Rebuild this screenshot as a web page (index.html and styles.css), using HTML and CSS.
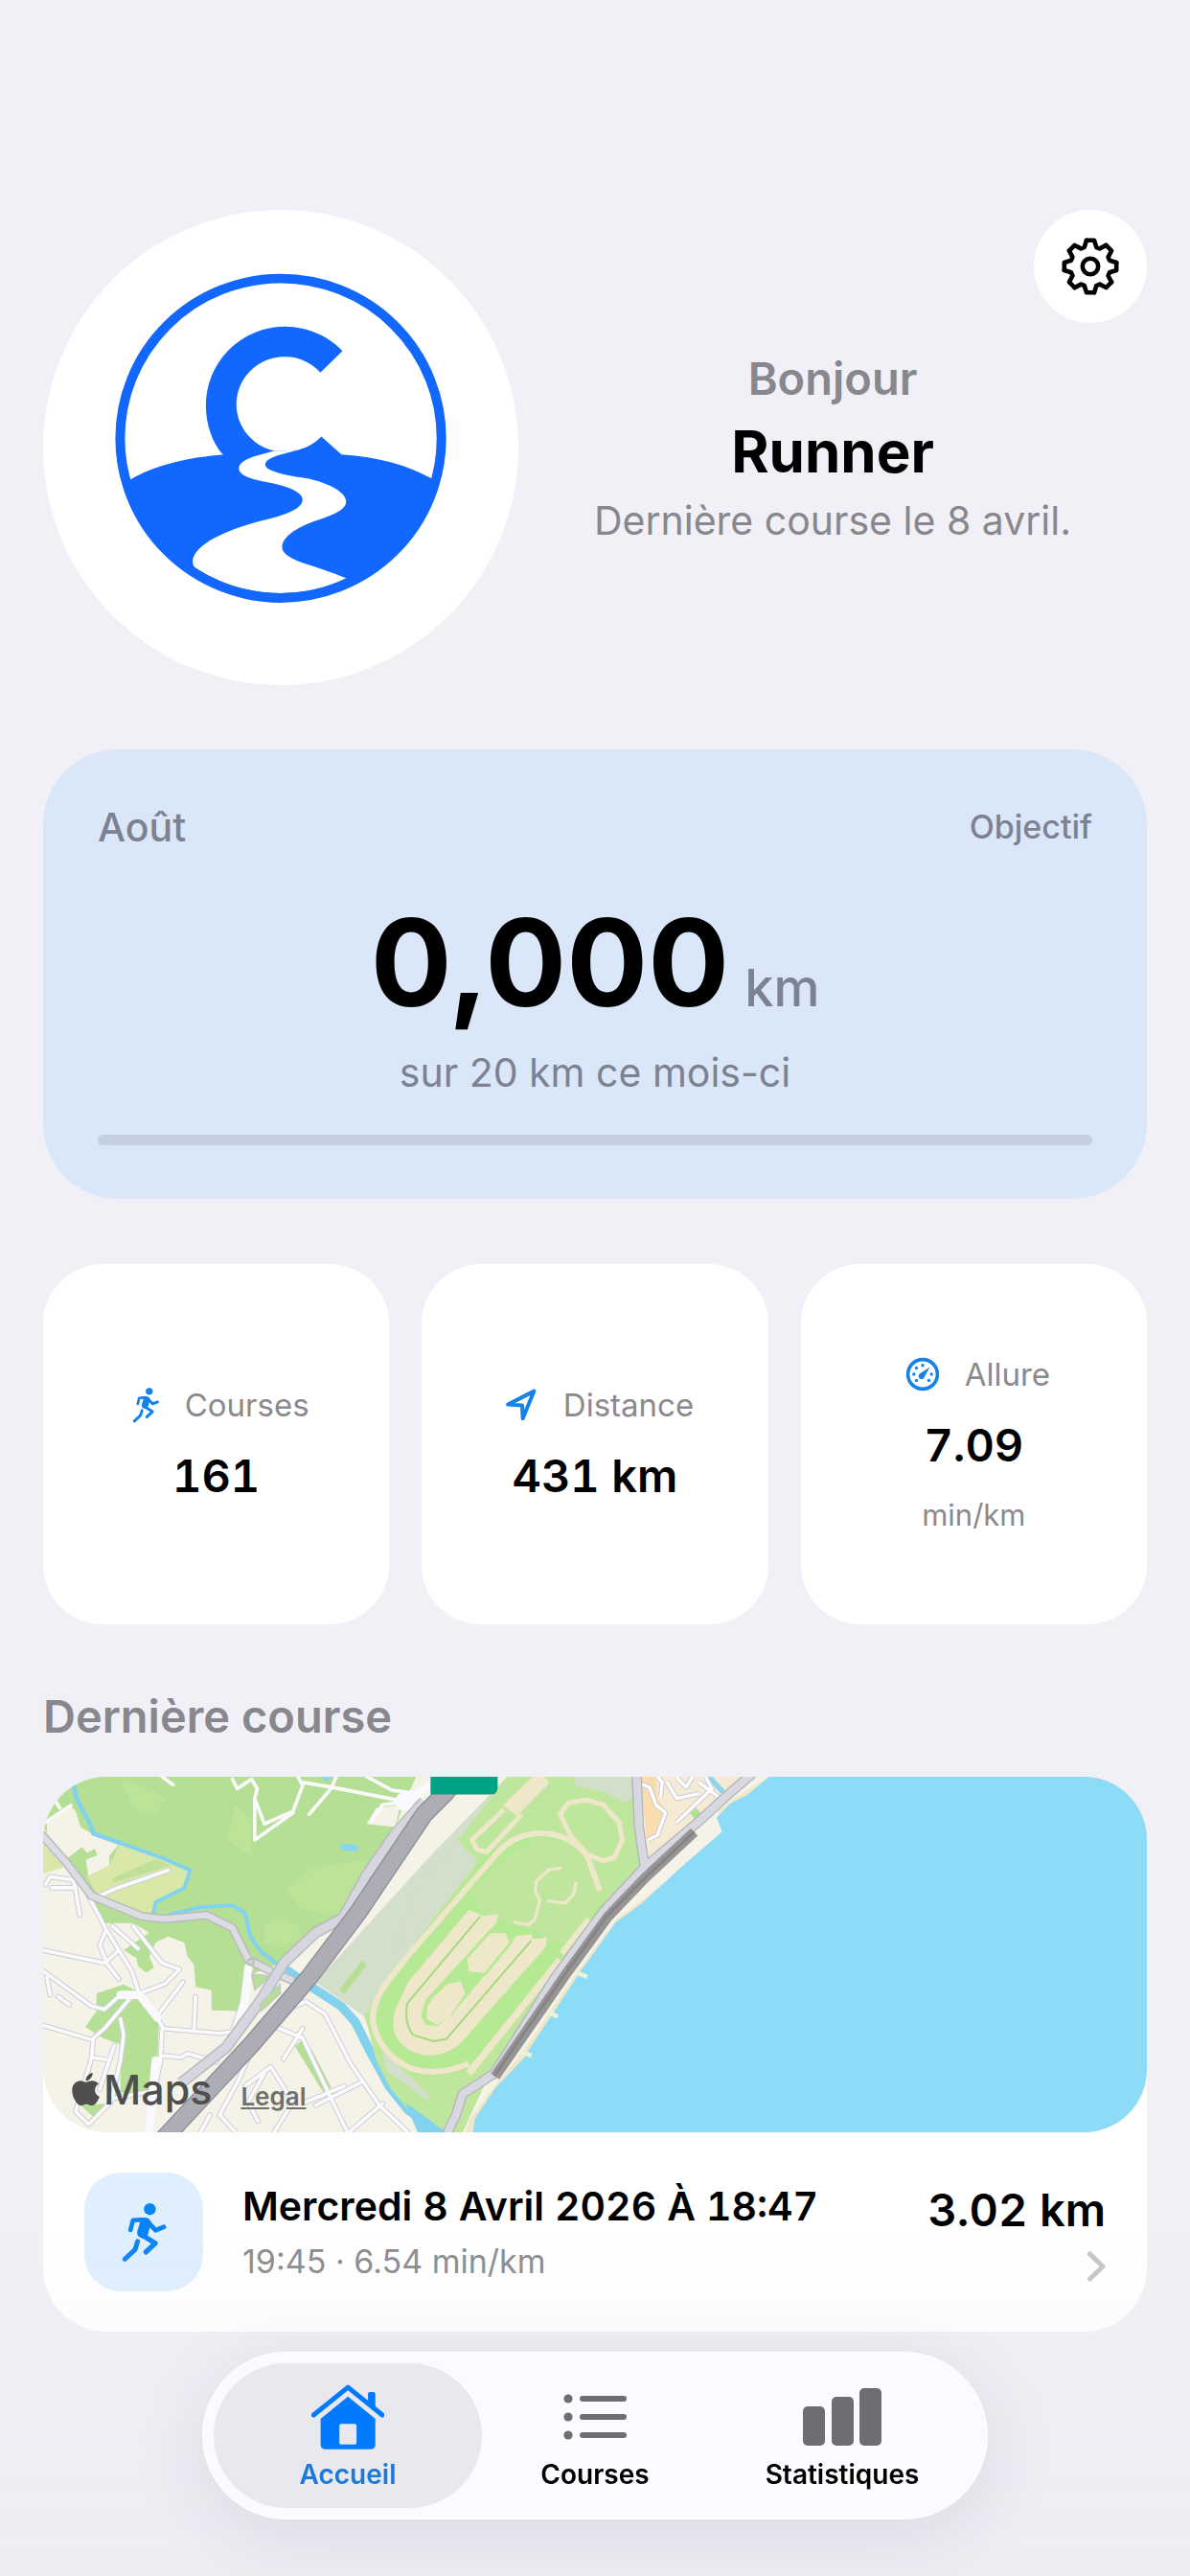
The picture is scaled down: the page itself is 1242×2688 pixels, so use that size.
FILE: index.html
```html
<!DOCTYPE html>
<html lang="fr">
<head>
  <meta charset="UTF-8">
  <meta name="viewport" content="width=device-width, initial-scale=1.0">
  <title>Accueil</title>
  <link rel="stylesheet" href="styles.css">
</head>
<body>
  <svg width="0" height="0" class="defs" aria-hidden="true">
    <symbol id="runner" viewBox="36 30 50 64">
      <circle cx="67.4" cy="38.2" r="6.2" fill="currentColor"/>
      <g fill="none" stroke="currentColor" stroke-linecap="round" stroke-linejoin="round">
        <path d="M62 49.2 L49.8 49.8 L47.2 60" stroke-width="4.6"/>
        <path d="M65.5 52 L73.5 60.2 L82 56.8" stroke-width="4.8"/>
        <path d="M59 65 L73 73.8 L63.2 83" stroke-width="5.2"/>
        <path d="M54.6 71.8 L52 80.4 L41.2 90.3" stroke-width="5"/>
      </g>
      <path d="M54 47.3 H63 Q67 47.3 69 52 L65.4 64.6 Q64 69 59 68.6 Q53.4 67 54.2 61.6 L57.4 51 Z" fill="currentColor"/>
    </symbol>
  </svg>

  <main class="app">
    <header class="profile">
      <div class="avatar">
        <svg viewBox="0 0 496 496" role="img" aria-label="Logo">
          <g transform="translate(-15 -19) scale(.3443 .3381)">
            <path class="logo-blue" d="M293 893 L308 889 C380 845 480 820 589 812 C557 775 537 720 537 660 A240 243 0 0 1 951 492 L884 558 A146 147 0 1 0 745 800 L815 798 C845 790 870 775 887 756 L948 811 C1060 818 1150 845 1221 885 L1236 890 A487 493 0 0 1 293 893 Z"/>
            <path fill="#fff" d="M745 800 C700 812 637 825 637 853 C637 880 690 890 720 896 C790 908 830 930 830 950 C830 985 750 1005 700 1017 C580 1050 497 1095 497 1143 Q497 1155 507 1162 C580 1212 670 1239 764 1239 C835 1239 905 1222 962 1193 C920 1175 880 1162 850 1152 C800 1137 768 1118 768 1098 C768 1065 810 1040 850 1023 C910 1003 962 985 962 957 C962 925 900 895 840 884 C770 875 717 860 717 843 C717 822 760 812 815 798 Z"/>
            <ellipse cx="764" cy="761" rx="487" ry="493" fill="none" stroke="#1268fe" stroke-width="29"/>
          </g>
        </svg>
      </div>
      <div class="profile-side">
        <button class="settings" type="button" aria-label="Réglages">
          <svg viewBox="-30 -30 60 60">
            <defs>
              <path id="tooth" d="M-4 -27.2 H4 L6.3 -20 L9.7 -18.6 L16.4 -22.1"/>
            </defs>
            <g fill="none" stroke="#000" stroke-width="4.6" stroke-linejoin="round" stroke-linecap="round">
              <use href="#tooth"/>
              <use href="#tooth" transform="rotate(45)"/>
              <use href="#tooth" transform="rotate(90)"/>
              <use href="#tooth" transform="rotate(135)"/>
              <use href="#tooth" transform="rotate(180)"/>
              <use href="#tooth" transform="rotate(225)"/>
              <use href="#tooth" transform="rotate(270)"/>
              <use href="#tooth" transform="rotate(315)"/>
              <circle r="8.2"/>
            </g>
          </svg>
        </button>
        <div class="greeting">
          <p class="hello">Bonjour</p>
          <h1>Runner</h1>
          <p class="last">Dernière course le 8 avril.</p>
        </div>
      </div>
    </header>

    <section class="goal">
      <div class="goal-head">
        <h2>Août</h2>
        <button type="button">Objectif</button>
      </div>
      <p class="goal-value"><strong>0,000</strong><span>km</span></p>
      <p class="goal-text" id="goal-text">sur 20 km ce mois-ci</p>
      <progress value="0" max="20" aria-labelledby="goal-text"></progress>
    </section>

    <section class="stats">
      <div class="stat">
        <div class="stat-label">
          <svg class="icon-run" viewBox="0 0 30 38"><use href="#runner"/></svg>
          <span>Courses</span>
        </div>
        <strong>161</strong>
      </div>
      <div class="stat">
        <div class="stat-label">
          <svg class="icon-stat" viewBox="0 0 36 36">
            <path d="M31.4 3.6 L4 17.6 L19 18.6 L19.6 32.2 Z" fill="none" stroke="currentColor" stroke-width="4" stroke-linejoin="round"/>
          </svg>
          <span>Distance</span>
        </div>
        <strong>431 km</strong>
      </div>
      <div class="stat">
        <div class="stat-label">
          <svg class="icon-stat" viewBox="0 0 36 36">
            <circle cx="18" cy="18" r="15.4" fill="none" stroke="currentColor" stroke-width="3.6"/>
            <g fill="currentColor">
              <circle cx="18" cy="8.8" r="1.7"/>
              <circle cx="11.5" cy="11.5" r="1.7"/>
              <circle cx="8.8" cy="18" r="1.7"/>
              <circle cx="27.2" cy="18" r="1.7"/>
              <circle cx="11.5" cy="24.5" r="1.7"/>
              <circle cx="24.5" cy="24.5" r="1.7"/>
              <path d="M25.4 10.4 L15.6 17 A3.2 3.2 0 1 0 20 20.6 Z"/>
            </g>
          </svg>
          <span>Allure</span>
        </div>
        <strong>7.09</strong>
        <small>min/km</small>
      </div>
    </section>

    <section class="last-run">
      <h2>Dernière course</h2>
      <div class="run-card">
        <div class="map">
          <svg class="map-drawing" viewBox="0 0 3453 1113" preserveAspectRatio="xMidYMid slice" aria-hidden="true">
            <rect width="3453" height="1113" fill="#f5f2e8"/>

            <!-- ville et parc, à l'ouest -->
            <g transform="translate(-48 -342)">
              <path fill="#b4df95" d="M48 342 H1215 L1175 430 1140 530 1065 640 985 780 860 850 780 930 700 960 690 1000 655 1075 575 1073 575 1010 525 1000 520 930 500 905 490 862 440 842 400 860 380 905 395 940 370 955 345 935 340 910 300 885 380 830 330 800 240 800 200 720 120 600 48 500Z"/>
              <path fill="#f5f2e8" d="M60 480 L130 430 150 450 165 500 200 520 290 548 255 590 255 620 190 655 180 590 120 600 60 520Z"/>
              <path fill="#b4df95" d="M120 600 L170 562 185 580 210 568 218 588 175 605 190 655Z"/>
              <path fill="#d9e7a9" d="M48 550 L115 625 48 645ZM290 548 L510 635 500 680 395 745 390 780 220 715 185 655 255 620Z"/>
              <path fill="#c2df98" d="M265 660 L400 600 450 620 265 675Z"/>
              <path fill="#bde399" d="M290 350 L400 390 430 410 400 465 330 440ZM650 430 L700 480 700 590 625 540ZM880 630 L1060 600 1040 680 985 780 860 760 810 700ZM740 810 L790 780 850 810 850 850 790 880 740 860Z"/>
              <path fill="#b4df95" d="M215 1020 L300 992 345 1015 390 1060 410 1120 405 1240 380 1340 290 1330 290 1180 235 1160 180 1125 215 1075ZM165 1370 L240 1365 210 1410ZM835 1185 L860 1165 890 1200 950 1315 925 1330Z"/>
              <path fill="#f5f2e8" d="M1060 490 L1090 440 1165 430 1150 500ZM820 930 L960 850 870 970Z"/>
              <path fill="#d2dfca" d="M1500 342 L1260 590 900 985 1050 1090 1110 1230 1260 1380 1700 800 1700 342Z"/>
              <path fill="#b4e08f" d="M975 1010 L1045 918 1060 930 990 1022Z"/>
              <path fill="#8bd4ee" d="M980 552 L1032 556 1030 577 980 572ZM915 342 H955 L935 358Z"/>

              <g fill="none" stroke="#82d2ee" stroke-linejoin="round">
                <path stroke-width="14" d="M138 342 L152 410 195 490 205 520 290 550"/>
                <path stroke-width="12" d="M290 550 L430 600 508 635 490 690 400 735 392 775M440 775 L540 750 640 745 680 768 695 840 730 890 790 935"/>
                <path stroke-width="28" d="M800 940 L850 975 980 1060 1025 1110 1070 1200 1130 1310 1190 1385 1270 1440"/>
              </g>

              <g fill="none" stroke-linejoin="round" stroke-linecap="round">
                <path class="street-case" d="M48 885 L240 925 280 890M48 950 L200 1060 240 1070 290 1025 350 1025 400 1090 425 1130 600 1145 640 1140 670 1050 690 930M48 1120 L200 1165 240 1130 320 1035M190 715 L245 820 325 950 350 1025M225 715 L280 690 440 635M55 680 L70 655 140 665 150 690 75 690M150 700 L163 775M245 820 L225 870 250 930 285 975M265 810 L345 880M330 810 L420 925 475 945 430 990 350 1020M405 1090 L485 985M525 1030 L520 1135M425 1215 L480 1220 500 1208 590 1235M420 1130 L415 1230 395 1330 380 1400M290 1100 L300 1150 290 1230 260 1360 190 1430 150 1390 200 1220 205 1160M270 1185 L225 1320M200 1220 L250 1228M60 970 L70 1025M95 1030 L130 1055M260 1350 L370 1330"/>
                <path class="street-case" d="M740 1110 L660 1290 600 1400 650 1455M740 1110 L860 1160 940 1330 1000 1455M790 1080 L870 1045 930 1085 1010 1240 1100 1370 1190 1455M860 1130 L800 1225M680 1310 L760 1250 830 1360 770 1455M740 1270 L690 1360 720 1420M870 1360 L990 1310M1010 1450 L1110 1365M1040 1300 L900 1370M540 1455 L570 1400"/>
                <path class="street" d="M48 885 L240 925 280 890M48 950 L200 1060 240 1070 290 1025 350 1025 400 1090 425 1130 600 1145 640 1140 670 1050 690 930M48 1120 L200 1165 240 1130 320 1035M190 715 L245 820 325 950 350 1025M225 715 L280 690 440 635M55 680 L70 655 140 665 150 690 75 690M150 700 L163 775M245 820 L225 870 250 930 285 975M265 810 L345 880M330 810 L420 925 475 945 430 990 350 1020M405 1090 L485 985M525 1030 L520 1135M425 1215 L480 1220 500 1208 590 1235M420 1130 L415 1230 395 1330 380 1400M290 1100 L300 1150 290 1230 260 1360 190 1430 150 1390 200 1220 205 1160M270 1185 L225 1320M200 1220 L250 1228M60 970 L70 1025M95 1030 L130 1055M260 1350 L370 1330"/>
                <path class="street" d="M740 1110 L660 1290 600 1400 650 1455M740 1110 L860 1160 940 1330 1000 1455M790 1080 L870 1045 930 1085 1010 1240 1100 1370 1190 1455M860 1130 L800 1225M680 1310 L760 1250 830 1360 770 1455M740 1270 L690 1360 720 1420M870 1360 L990 1310M1010 1450 L1110 1365M1040 1300 L900 1370M540 1455 L570 1400"/>
                <path class="street" d="M48 490 L135 432M75 400 L100 440M420 342 L455 368M640 350 L655 380 700 350 718 380 710 410 740 490 830 450 860 370 845 342M710 410 V540 L830 455M860 360 L950 375 1180 420M965 342 L950 378 880 460M1060 342 L1140 385 1200 392M1180 420 L1110 430 1075 480"/>
                <path stroke="#fafafe" stroke-width="26" d="M290 1025 H350 L405 1095M690 940 L670 1130M400 1230 L380 1455M1180 420 L1260 370"/>
                <circle cx="1178" cy="420" r="20" stroke="#fafafe" stroke-width="18"/>
              </g>

              <g fill="none" stroke-linejoin="round">
                <path stroke="#b9b9c2" stroke-width="28" d="M40 520 L120 610 200 715 360 780 430 787 560 775 640 815 690 915 770 955 830 980"/>
                <path stroke="#dcdce3" stroke-width="19" d="M40 520 L120 610 200 715 360 780 430 787 560 775 640 815 690 915 770 955 830 980"/>
                <path stroke="#b9b9c2" stroke-width="36" d="M1240 420 L1150 520 1060 650 985 785 900 830 800 925 730 1040 620 1190 480 1300"/>
                <path stroke="#d6d6de" stroke-width="27" d="M1240 420 L1150 520 1060 650 985 785 900 830 800 925 730 1040 620 1190 480 1300"/>
                <path stroke="#8e8e96" stroke-width="58" d="M420 1480 L700 1180 880 970 1035 765 1240 460 1330 370 1370 320"/>
                <path stroke="#adadb6" stroke-width="50" d="M420 1480 L700 1180 880 970 1035 765 1240 460 1330 370 1370 320"/>
              </g>
              <path fill="#b4df95" stroke="#c4c4cc" stroke-width="4" d="M700 960 L760 965 710 1010ZM790 990 V1020 L730 1075 725 1055Z"/>
              <circle cx="697" cy="922" r="10" fill="#c9dcbc" stroke="#b9b9c2" stroke-width="5"/>
            </g>

            <!-- hippodrome et bord de mer -->
            <g transform="translate(1152 -42)">
              <path fill="#f5f2e8" d="M190 95 L100 190 30 300 -60 400 -40 340 60 200 140 98Z"/>
              <path fill="#bfe69d" d="M300 42 H690 L715 180 735 310 560 560 250 960 160 1155 H90 L-10 1085 -70 1010 -110 930 -145 790 -60 650 0 575 200 320 145 240Z"/>
              <path fill="#d2dfca" d="M510 42 H690 V100 L670 125 600 90 510 70ZM145 245 L205 300 130 400 0 560 -60 590 0 420ZM-90 900 L60 1040 50 1055 -80 960Z"/>
              <path fill="#b5e993" d="M230 290 Q330 215 440 225 Q540 250 590 400 L600 450 470 620 170 960 Q60 985 0 950 Q-110 900 -110 800 L-60 670 Z"/>
              <path fill="#c0e59e" d="M250 330 L400 230 520 260 595 420 500 560 430 560 400 530 220 470 190 400Z"/>
              <path fill="#efe7c9" d="M380 42 H415 L432 62 330 165 287 132Z"/>
              <g fill="none" stroke="#efe7c9" stroke-width="15" stroke-linejoin="round">
                <path d="M290 145 L190 240 205 270 235 278 345 160"/>
                <path d="M500 230 L465 160 490 125 545 115 600 130 650 185 660 240 635 295 600 305 550 285Z"/>
                <path d="M590 400 L550 290 Q490 215 390 220 Q320 225 270 280 L0 590 -60 665 Q-125 740 -120 810 Q-100 910 0 955 Q80 980 180 940" stroke-width="18"/>
                <path d="M470 328 L430 333 390 370 388 400 402 430 385 490 365 505 320 498M515 372 L508 410 480 438 425 430" stroke-width="10"/>
                <path d="M555 488 L470 595" stroke-width="18"/>
                <path d="M465 615 L180 970" stroke-width="22"/>
              </g>
              <!-- pistes intérieures -->
              <path fill="#efe7c9" d="M180 458 L225 478 272 472 265 500 45 740 30 790 45 818 80 822 110 795 330 540 375 535 380 550 425 545 420 575 150 880 Q70 940 -10 895 Q-75 850 -50 770 L-10 685 Z"/>
              <path fill="none" stroke="#a5d981" stroke-width="6" stroke-linejoin="round" d="M375 555 L110 862 70 870 5 850 Q-25 810 -12 750 L215 480"/>
              <path fill="#b5e993" d="M175 600 L230 657 280 600 125 790 80 822 38 800 45 740 Z"/>
              <path fill="#efe7c9" d="M115 690 L155 683 168 720 120 795 80 818 48 800 50 760 70 730Z"/>
              <path fill="#efe7c9" stroke="#b5e993" stroke-width="8" d="M245 528 L295 526 312 560 230 661 176 655 171 610Z"/>

              <path fill="#efe7c9" d="M640 490 L850 330 975 215 960 150 1010 110 1120 42 H2400 V1200 H150 L185 1110 260 1010 350 900 520 650Z"/>
              <path fill="#f5ebd5" d="M718 42 H1060 L880 200 745 310Z"/>
              <path fill="#fbdcae" d="M718 42 H765 L770 110 800 155 765 230 735 240Z"/>
              <path fill="#b4df95" d="M870 155 L890 140 910 160 890 178Z"/>
              <path fill="#8cdbf7" d="M1120 42 H2400 V1200 H185 L200 1110 260 1020 350 925 365 900 530 650 640 497 720 440 850 320 972 215 955 170 1000 125 1050 100Z"/>
              <path stroke="#8bd4ee" stroke-width="16" d="M930 42 L975 90"/>
              <path fill="none" stroke="#eef3d8" stroke-width="14" d="M515 655 L550 668M425 778 L458 792M340 900 L376 915"/>

              <g fill="none" stroke-linejoin="round">
                <path stroke="#c9c9d3" stroke-width="16" d="M718 65 L745 75 765 130 795 155 770 225 740 240M770 42 L785 60 780 105M800 60 L830 110 900 95M830 185 L940 80 920 42M830 45 L860 75 880 42M900 60 L960 105"/>
                <path stroke="#fff" stroke-width="10" d="M718 65 L745 75 765 130 795 155 770 225 740 240M770 42 L785 60 780 105M800 60 L830 110 900 95M830 185 L940 80 920 42M830 45 L860 75 880 42M900 60 L960 105"/>
                <path stroke="#b4b4bd" stroke-width="32" d="M1070 30 L1000 90 890 190 730 325 600 465 450 670 260 970 160 1035 140 1100 105 1170M705 42 L712 200 730 325"/>
                <path stroke="#d8d8e0" stroke-width="24" d="M1070 30 L1000 90 890 190 730 325 600 465 450 670 260 970 160 1035 140 1100 105 1170M705 42 L712 200 730 325"/>
                <path stroke="#969494" stroke-width="32" d="M885 215 L730 360 615 480 480 665 262 980"/>
                <path stroke="#858383" stroke-width="8" d="M885 215 L730 360 612 478 478 663 260 978"/>
              </g>
              <path fill="#00a383" d="M60 42 H270 V76 Q270 98 248 98 H60Z"/>
              <path fill="#82d2ee" d="M-20 1060 L110 1155 H20Z"/>
            </g>
          </svg>
          <div class="map-credit">
            <span class="brand">
              <svg viewBox="4 32 376 448" aria-hidden="true">
                <path fill="currentColor" d="M318.7 268.7c-.2-36.7 16.4-64.4 50-84.8-18.8-26.9-47.2-41.7-84.7-44.6-35.5-2.8-74.3 20.7-88.5 20.7-15 0-49.4-19.7-76.4-19.7C63.3 141.2 4 184.8 4 273.5q0 39.3 14.4 81.2c12.8 36.7 59 126.7 107.2 125.2 25.2-.6 43-17.9 75.8-17.9 31.8 0 48.3 17.9 76.4 17.9 48.6-.7 90.4-82.5 102.6-119.3-65.2-30.7-61.7-90-61.7-91.9zm-56.6-164.2c27.3-32.4 24.8-61.9 24-72.5-24.1 1.4-52 16.4-67.9 34.9-17.5 19.8-27.8 44.3-25.6 71.9 26.1 2 49.9-11.4 69.5-34.3z"/>
              </svg>Maps</span>
            <a href="#legal">Legal</a>
          </div>
        </div>
        <a class="run" href="#course">
          <span class="run-icon">
            <svg viewBox="0 0 50 64"><use href="#runner"/></svg>
          </span>
          <span class="run-info">
            <strong>Mercredi 8 Avril 2026 À 18:47</strong>
            <small>19:45 · 6.54 min/km</small>
          </span>
          <span class="run-distance">
            <strong>3.02 km</strong>
            <svg viewBox="0 0 20 32" aria-hidden="true">
              <path d="M3.5 3 L17 16 L3.5 29" fill="none" stroke="#c5c5c7" stroke-width="5" stroke-linecap="round" stroke-linejoin="round"/>
            </svg>
          </span>
        </a>
      </div>
    </section>
  </main>

  <div class="fade"></div>
  <nav class="tabbar">
    <a href="#accueil" class="active">
      <svg viewBox="0 0 229 204" width="76" height="68" aria-hidden="true">
        <path d="M7 97 L115 10 L223 97" fill="none" stroke="#e9e8ee" stroke-width="34"/>
        <path d="M178 50 V30 Q178 24 184 24 H195 Q201 24 201 30 V82Z" fill="#007aff"/>
        <path d="M7 96 L115 9 L223 96" fill="none" stroke="#007aff" stroke-width="15" stroke-linecap="round" stroke-linejoin="round"/>
        <path d="M115 38 L29 108 V188 Q29 204 45 204 H185 Q201 204 201 188 V108 Z" fill="#007aff"/>
        <rect x="88" y="124" width="54" height="65" rx="6" fill="#e9e8ee"/>
      </svg>
      <span>Accueil</span>
    </a>
    <a href="#courses">
      <svg viewBox="0 0 66 50" width="66" height="50" aria-hidden="true" fill="#6e6d73">
        <circle cx="5" cy="6" r="4.6"/><rect x="17" y="3" width="49" height="6" rx="3"/>
        <circle cx="5" cy="25" r="4.6"/><rect x="17" y="22" width="49" height="6" rx="3"/>
        <circle cx="5" cy="44" r="4.6"/><rect x="17" y="41" width="49" height="6" rx="3"/>
      </svg>
      <span>Courses</span>
    </a>
    <a href="#statistiques">
      <svg viewBox="0 0 82 60" width="82" height="60" aria-hidden="true" fill="#6e6d73">
        <rect x="0" y="19" width="23" height="41" rx="5"/>
        <rect x="30" y="9" width="23" height="51" rx="5"/>
        <rect x="59" y="0" width="23" height="60" rx="5"/>
      </svg>
      <span>Statistiques</span>
    </a>
  </nav>
</body>
</html>
```

FILE: styles.css
```css
*{
  box-sizing: border-box;
  margin: 0;
  padding: 0;
}
body{
  min-height: 100vh;
  font-family: Inter, "Liberation Sans", sans-serif;
  color: #000;
  background-color: #f1f0f6;
}
a{
  color: inherit;
  text-decoration: none;
}
button{
  border: none;
  font-family: inherit;
  cursor: pointer;
}
svg{
  display: block;
}
.defs{
  position: absolute;
}
.app{
  padding: 219px 45px 255px;
}

/* profil */
.profile{
  display: flex;
}
.avatar{
  width: 496px;
  height: 496px;
  flex-shrink: 0;
  border-radius: 50%;
  overflow: hidden;
  background-color: #fff;
}
.logo-blue{
  fill: #1268fe;
}
.profile-side{
  flex: 1;
  display: grid;
  grid-template-rows: 1fr auto 1fr;
}
.settings{
  width: 118px;
  height: 118px;
  justify-self: end;
  border-radius: 50%;
  background-color: #fff;
  display: flex;
  align-items: center;
  justify-content: center;
}
.settings svg{
  width: 60px;
  height: 60px;
}
.greeting{
  display: flex;
  flex-direction: column;
  align-items: center;
  gap: 12px;
  color: #88878d;
}
.hello{
  font-size: 47px;
  line-height: 58px;
  font-weight: 600;
}
.greeting h1{
  font-size: 60px;
  line-height: 70px;
  font-weight: 700;
  color: #000;
}
.last{
  font-size: 41px;
  line-height: 50px;
}

/* objectif du mois */
.goal{
  margin-top: 67px;
  padding: 56px 57px;
  border-radius: 78px;
  background-color: #dae7f8;
  color: #7c8291;
}
.goal-head{
  display: flex;
  align-items: center;
  justify-content: space-between;
}
.goal-head h2{
  font-size: 41px;
  line-height: 50px;
  font-weight: 500;
}
.goal-head button{
  font-size: 34px;
  line-height: 50px;
  font-weight: 500;
  color: inherit;
  background: none;
}
.goal-value{
  margin-top: 38px;
  display: flex;
  align-items: baseline;
  justify-content: center;
  gap: 16px;
}
.goal-value strong{
  font-size: 126px;
  line-height: 156px;
  font-weight: 700;
  color: #000;
}
.goal-value span{
  font-size: 54px;
  font-weight: 500;
}
.goal-text{
  margin-top: 12px;
  font-size: 41px;
  line-height: 50px;
  text-align: center;
}
.goal progress{
  width: 100%;
  height: 11px;
  margin-top: 40px;
  display: block;
  appearance: none;
  border: none;
  border-radius: 6px;
  overflow: hidden;
  background-color: #c4d0e0;
}
.goal progress::-webkit-progress-bar{
  background-color: #c4d0e0;
}
.goal progress::-webkit-progress-value{
  background-color: #007aff;
}

/* statistiques */
.stats{
  margin-top: 68px;
  display: grid;
  grid-template-columns: repeat(3, 1fr);
  gap: 34px;
}
.stat{
  min-height: 376px;
  border-radius: 62px;
  background-color: #fff;
  display: flex;
  flex-direction: column;
  align-items: center;
  justify-content: center;
  gap: 24px;
}
.stat-label{
  padding-left: 8px;
  display: flex;
  align-items: center;
  gap: 26px;
  font-size: 33px;
  line-height: 42px;
  color: #8a8a8e;
}
.stat-label svg{
  color: #1482e6;
}
.icon-run{
  width: 30px;
  height: 38px;
}
.icon-stat{
  width: 36px;
  height: 36px;
}
.stat strong{
  font-size: 47px;
  line-height: 58px;
  font-weight: 600;
  font-variant-numeric: tabular-nums;
}
.stat small{
  font-size: 31px;
  line-height: 40px;
  color: #8a8a8e;
}

/* derniere course */
.last-run{
  margin-top: 67px;
}
.last-run h2{
  font-size: 47px;
  line-height: 58px;
  font-weight: 600;
  color: #88878d;
}
.run-card{
  margin-top: 34px;
  border-radius: 66px;
  background-color: #fff;
}
.map{
  height: 371px;
  border-radius: 66px;
  position: relative;
  overflow: hidden;
}
.map-drawing{
  width: 100%;
  height: 100%;
}
.street-case{
  stroke: #cdcdd6;
  stroke-width: 17px;
}
.street{
  stroke: #fafafd;
  stroke-width: 11px;
}
.map-credit{
  position: absolute;
  left: 30px;
  bottom: 20px;
  display: flex;
  align-items: baseline;
  gap: 30px;
  color: #4f4f4f;
}
.brand{
  display: flex;
  align-items: center;
  gap: 4px;
  font-size: 43px;
  line-height: 50px;
  font-weight: 500;
}
.brand svg{
  width: 29px;
  height: 34px;
}
.map-credit a{
  font-size: 26px;
  font-weight: 600;
  color: #6f6f6c;
  text-decoration: underline;
}
.run{
  padding: 42px 43px;
  display: flex;
  align-items: center;
}
.run-icon{
  width: 124px;
  height: 124px;
  border-radius: 38px;
  background-color: #dfeffe;
  color: #0a84f5;
  display: flex;
  align-items: center;
  justify-content: center;
}
.run-icon svg{
  width: 50px;
  height: 64px;
}
.run-info{
  flex: 1;
  margin-left: 41px;
  display: flex;
  flex-direction: column;
  gap: 12px;
}
.run-info strong{
  font-size: 41px;
  line-height: 50px;
  font-weight: 600;
  font-variant-numeric: tabular-nums;
}
.run-info small{
  font-size: 34px;
  line-height: 42px;
  color: #8a8a8e;
}
.run-distance{
  display: flex;
  flex-direction: column;
  align-items: flex-end;
  gap: 14px;
}
.run-distance strong{
  font-size: 47px;
  line-height: 58px;
  font-weight: 600;
  font-variant-numeric: tabular-nums;
}
.run-distance svg{
  width: 20px;
  height: 32px;
}

/* barre d'onglets */
.fade{
  position: fixed;
  left: 0;
  right: 0;
  bottom: 0;
  height: 360px;
  background: linear-gradient(rgba(236, 235, 242, 0), rgba(236, 235, 242, .5));
  pointer-events: none;
}
.tabbar{
  position: fixed;
  left: 50%;
  bottom: 59px;
  transform: translateX(-50%);
  padding: 11px;
  border: 1px solid #fff;
  border-radius: 88px;
  background-color: #fafaff;
  box-shadow: 0 16px 80px rgba(40, 40, 70, .1);
  display: flex;
}
.tabbar a{
  width: 280px;
  height: 151px;
  padding-top: 20px;
  border-radius: 76px;
  display: grid;
  grid-template-rows: 72px 36px;
  gap: 6px;
  place-items: center;
  align-content: start;
  font-size: 28px;
  line-height: 36px;
  font-weight: 600;
}
.tabbar a + a{
  margin-left: -22px;
}
.tabbar a.active{
  color: #1a7ad9;
  background-color: #e9e8ee;
}
```
